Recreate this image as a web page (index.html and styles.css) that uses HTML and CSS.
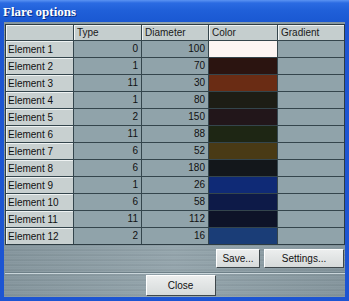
FILE: index.html
```html
<!DOCTYPE html>
<html lang="en">
<head>
    <meta charset="UTF-8">
    <meta name="viewport" content="width=device-width, initial-scale=1.0">
    <title>Flare options</title>
    <link rel="stylesheet" href="styles.css">
</head>
<body>
    <div class="window">
        <div class="titlebar">
            <span class="title">Flare options</span>
        </div>
        <div class="content">
            <div class="grid">
                <div class="cell head corner"></div>
                <div class="cell head">Type</div>
                <div class="cell head">Diameter</div>
                <div class="cell head">Color</div>
                <div class="cell head">Gradient</div>

                <div class="cell rowhead">Element 1</div>
                <div class="cell num">0</div>
                <div class="cell num">100</div>
                <div class="cell swatch" style="background:#fcf5f3"></div>
                <div class="cell"></div>

                <div class="cell rowhead">Element 2</div>
                <div class="cell num">1</div>
                <div class="cell num">70</div>
                <div class="cell swatch" style="background:#2b1410"></div>
                <div class="cell"></div>

                <div class="cell rowhead">Element 3</div>
                <div class="cell num">11</div>
                <div class="cell num">30</div>
                <div class="cell swatch" style="background:#6a2c14"></div>
                <div class="cell"></div>

                <div class="cell rowhead">Element 4</div>
                <div class="cell num">1</div>
                <div class="cell num">80</div>
                <div class="cell swatch" style="background:#1d1d15"></div>
                <div class="cell"></div>

                <div class="cell rowhead">Element 5</div>
                <div class="cell num">2</div>
                <div class="cell num">150</div>
                <div class="cell swatch" style="background:#22161a"></div>
                <div class="cell"></div>

                <div class="cell rowhead">Element 6</div>
                <div class="cell num">11</div>
                <div class="cell num">88</div>
                <div class="cell swatch" style="background:#1e2614"></div>
                <div class="cell"></div>

                <div class="cell rowhead">Element 7</div>
                <div class="cell num">6</div>
                <div class="cell num">52</div>
                <div class="cell swatch" style="background:#493a15"></div>
                <div class="cell"></div>

                <div class="cell rowhead">Element 8</div>
                <div class="cell num">6</div>
                <div class="cell num">180</div>
                <div class="cell swatch" style="background:#13171b"></div>
                <div class="cell"></div>

                <div class="cell rowhead">Element 9</div>
                <div class="cell num">1</div>
                <div class="cell num">26</div>
                <div class="cell swatch" style="background:#0f2a76"></div>
                <div class="cell"></div>

                <div class="cell rowhead">Element 10</div>
                <div class="cell num">6</div>
                <div class="cell num">58</div>
                <div class="cell swatch" style="background:#0d1a48"></div>
                <div class="cell"></div>

                <div class="cell rowhead">Element 11</div>
                <div class="cell num">11</div>
                <div class="cell num">112</div>
                <div class="cell swatch" style="background:#0e1328"></div>
                <div class="cell"></div>

                <div class="cell rowhead">Element 12</div>
                <div class="cell num">2</div>
                <div class="cell num">16</div>
                <div class="cell swatch" style="background:#1a3d77"></div>
                <div class="cell"></div>
            </div>

            <div class="actions">
                <button type="button" class="btn btn-save">Save...</button>
                <button type="button" class="btn btn-settings">Settings...</button>
            </div>
            <div class="separator"></div>
            <div class="footer">
                <button type="button" class="btn btn-close">Close</button>
            </div>
        </div>
    </div>
</body>
</html>
```

FILE: styles.css
```css
* {
    box-sizing: border-box;
}
body {
    margin: 0;
    font-family: 'Liberation Sans', Arial, sans-serif;
    font-size: 10px;
    color: #000000;
    background-color: #1d55d2;
}
.window {
    width: 349px;
    height: 301px;
    display: flex;
    flex-direction: column;
}
.titlebar {
    height: 22px;
    padding-left: 3px;
    display: flex;
    align-items: center;
    background: linear-gradient(#5b93f2 0px, #2b6be2 3px, #1f5fd8 11px, #1a58d2 22px); /* barra blu stile XP */
}
.title {
    font-family: 'Liberation Serif', 'Times New Roman', serif;
    font-weight: bold;
    font-size: 13px;
    color: #ffffff;
    text-shadow: 1px 1px 0 #0a2f86;
    margin-top: 1px;
}
.content {
    flex: 1;
    border-left: 4px solid #1d55d2;
    border-right: 4px solid #1d55d2;
    border-bottom: 4px solid #1d55d2;
    padding: 2px 0 1px 1px;
    display: flex;
    flex-direction: column;
    /* metallo spazzolato */
    background-color: #8b9da5;
    background-image:
        repeating-linear-gradient(0deg, rgba(255,255,255,0.10) 0px, rgba(255,255,255,0) 1px, rgba(0,0,0,0.07) 2px, rgba(255,255,255,0.05) 3px, rgba(0,0,0,0) 5px),
        linear-gradient(90deg, rgba(0,0,0,0.06), rgba(255,255,255,0.08) 50%, rgba(0,0,0,0.06));
}
.grid {
    display: grid;
    grid-template-columns: 67px 67px 66px 68px 66px;
    grid-template-rows: 15px repeat(12, 16px);
    gap: 1px;
    width: 340px;
    border: 1px solid #2d3c43;
    background-color: #34454c; /* linee della griglia */
}
.cell {
    background-color: #90a3aa;
    line-height: 16px;
    white-space: nowrap;
    overflow: hidden;
}
.head {
    background-color: #c5cece;
    border-top: 1px solid #f2f5f5;
    border-left: 1px solid #f2f5f5;
    padding-left: 2px;
    line-height: 14px;
    color: #1a1a1a;
}
.rowhead {
    background-color: #c8d0d0;
    border-top: 1px solid #eef2f2;
    border-left: 1px solid #eef2f2;
    padding-left: 1px;
    line-height: 15px;
    color: #111111;
}
.num {
    text-align: right;
    padding-right: 3px;
    color: #111111;
}
.actions {
    display: flex;
    justify-content: flex-end;
    gap: 4px;
    margin-top: 4px;
    margin-right: 1px;
}
.btn {
    height: 19px;
    padding: 0;
    font-family: 'Liberation Sans', Arial, sans-serif;
    font-size: 10px;
    color: #111111;
    background: linear-gradient(#eceeee, #d6dada);
    border: 1px solid;
    border-color: #ffffff #3e474b #3e474b #ffffff;
    cursor: pointer;
}
.btn-save {
    width: 44px;
}
.btn-settings {
    width: 80px;
}
.separator {
    height: 2px;
    margin-top: 4px;
    border-top: 1px solid #6e8088;
    border-bottom: 1px solid #c9d5da;
}
.footer {
    display: flex;
    justify-content: center;
    margin-top: 1px;
    padding-left: 11px;
}
.btn-close {
    width: 70px;
    height: 21px;
}
```
